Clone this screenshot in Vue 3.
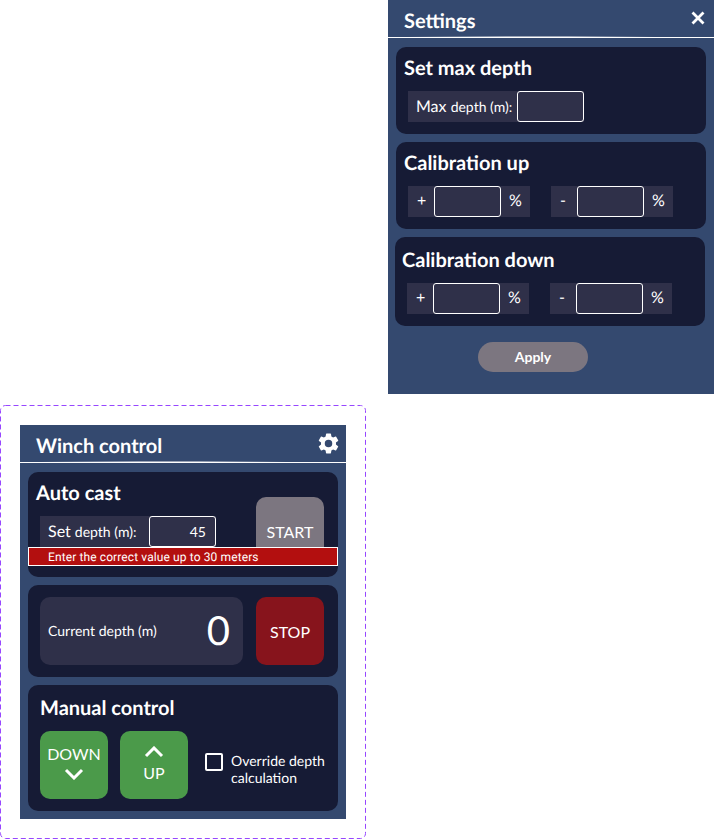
<script setup>
const calibrations = [
  { title: "Calibration up", shifted: false },
  { title: "Calibration down", shifted: true }
];
const signs = ["+", "-"];
</script>

<template>
  <div class="page">
    <section class="panel settings">
      <header class="panel__head">
        <h1 class="panel__title tied">Settings</h1>
        <svg class="close" viewBox="0 0 14 14" aria-hidden="true">
          <path d="M1.5 1.5l11 11M12.5 1.5l-11 11" />
        </svg>
      </header>

      <div class="card card--set">
        <h2 class="card__title">Set max depth</h2>
        <div class="field">
          <span class="field__label">Max <small>depth (m):</small></span>
          <input class="field__input" type="text" />
        </div>
      </div>

      <div
        v-for="c in calibrations"
        :key="c.title"
        :class="['card', 'card--cal', { 'card--shifted': c.shifted }]"
      >
        <h2 class="card__title tied">{{ c.title }}</h2>
        <div class="cal">
          <div v-for="s in signs" :key="s" class="field">
            <span class="field__sign">{{ s }}</span>
            <input class="field__input" type="text" />
            <span class="field__unit">%</span>
          </div>
        </div>
      </div>

      <button class="apply" type="button">Apply</button>
    </section>

    <div class="frame">
      <svg class="frame__dash" width="366" height="434" aria-hidden="true">
        <rect x="0.5" y="0.5" width="365" height="433" rx="5" />
      </svg>
      <section class="panel winch">
        <header class="panel__head panel__head--winch">
          <h1 class="panel__title">Winch control</h1>
          <svg class="gear" viewBox="0 0 24 24" aria-hidden="true">
            <path d="M19.14 12.94c.04-.3.06-.61.06-.94 0-.32-.02-.64-.07-.94l2.03-1.58a.49.49 0 0 0 .12-.61l-1.92-3.32a.49.49 0 0 0-.59-.22l-2.39.96c-.5-.38-1.03-.7-1.62-.94l-.36-2.54a.48.48 0 0 0-.48-.41h-3.84a.48.48 0 0 0-.47.41l-.36 2.54c-.59.24-1.13.57-1.62.94l-2.39-.96a.48.48 0 0 0-.59.22L2.74 8.87a.48.48 0 0 0 .12.61l2.03 1.58c-.05.3-.09.63-.09.94s.02.64.07.94l-2.03 1.58a.49.49 0 0 0-.12.61l1.92 3.32c.12.22.37.29.59.22l2.39-.96c.5.38 1.03.7 1.62.94l.36 2.54c.05.24.24.41.48.41h3.84c.24 0 .44-.17.47-.41l.36-2.54c.59-.24 1.13-.56 1.62-.94l2.39.96c.22.08.47 0 .59-.22l1.92-3.32a.48.48 0 0 0-.12-.61l-2.01-1.58zM12 15.6A3.6 3.6 0 1 1 12 8.4a3.6 3.6 0 0 1 0 7.2z" />
          </svg>
        </header>

        <div class="card card--auto">
          <div class="auto__left">
            <h2 class="card__title">Auto cast</h2>
            <div class="field">
              <span class="field__label">Set <small>depth (m):</small></span>
              <input class="field__input field__input--value" type="text" value="45" />
            </div>
          </div>
          <button class="action action--start" type="button">START</button>
          <div class="error">Enter the correct value up to 30 meters</div>
        </div>

        <div class="card card--depth">
          <div class="depth">
            <span class="depth__label">Current depth (m)</span>
            <span class="depth__value">0</span>
          </div>
          <button class="action action--stop" type="button">STOP</button>
        </div>

        <div class="card card--manual">
          <h2 class="card__title">Manual control</h2>
          <div class="manual">
            <button class="action action--go action--down" type="button">
              <span>DOWN</span>
              <svg class="chevron" viewBox="0 0 20 12" aria-hidden="true"><path d="M2 2l8 8 8-8" /></svg>
            </button>
            <button class="action action--go" type="button">
              <svg class="chevron" viewBox="0 0 20 12" aria-hidden="true"><path d="M2 10l8-8 8 8" /></svg>
              <span>UP</span>
            </button>
            <label class="override">
              <span class="override__box"></span>
              <span class="override__text tied">Override depth calculation</span>
            </label>
          </div>
        </div>
      </section>
    </div>
  </div>
</template>

<style>
html, body {
  margin: 0;
  background: #fff;
}
</style>

<style scoped>
.page {
  width: 714px;
  height: 839px;
  display: flex;
  flex-direction: column;
  font-family: Lato, "Liberation Sans", sans-serif;
  text-rendering: geometricPrecision;
  color: #fff;
  overflow: hidden;
}
.tied {
  font-variant-ligatures: common-ligatures discretionary-ligatures;
}
h1, h2 {
  margin: 0;
}
button {
  font-family: inherit;
  color: #fff;
  border: none;
  padding: 0;
}
.panel {
  background: #34496f;
  box-sizing: border-box;
  width: 326px;
  display: flex;
  flex-direction: column;
}
.panel__head {
  position: relative;
  height: 38px;
  box-sizing: border-box;
  border-bottom: 1px solid #fff;
  display: flex;
  align-items: center;
  justify-content: space-between;
  padding: 0 9px 0 16px;
  margin-bottom: 9px;
}
/* the rule in the design is very slightly tilted */
.panel__head::after {
  content: "";
  position: absolute;
  left: 20px;
  width: 246px;
  bottom: 0;
  height: 1px;
  background: linear-gradient(90deg, transparent, rgba(255, 255, 255, 0.5) 40%, rgba(255, 255, 255, 0.5) 65%, transparent);
}
.panel__title {
  font-size: 20px;
  font-weight: 700;
  line-height: 24px;
  padding-top: 4px;
}
.settings {
  height: 394px;
  margin-left: 388px;
  align-items: flex-start;
}
.settings .panel__head {
  width: 100%;
}
.close {
  width: 14px;
  height: 14px;
  margin-top: -2px;
  fill: none;
  stroke: #fff;
  stroke-width: 2.8;
}
.card {
  width: 310px;
  box-sizing: border-box;
  margin: 0 0 8px 8px;
  background: #161b35;
  border-radius: 10px;
  padding: 9px 8px 0;
}
.card__title {
  font-size: 20px;
  font-weight: 700;
  line-height: 24px;
  margin-bottom: 11px;
}
.card--set, .card--cal {
  height: 87px;
}
.card--shifted {
  height: 89px;
  margin-left: 7px;
  padding: 11px 7px 0;
}
.card--set .field, .card--cal .cal {
  margin-left: 4px;
}
.card--shifted .cal {
  margin-left: 5px;
}
.field {
  display: flex;
  height: 31px;
  background: #2f3049;
}
.card--set .field, .auto__left .field {
  width: fit-content;
}
.field__label {
  font-size: 16px;
  line-height: 31px;
  padding-left: 8px;
  width: 101px;
  white-space: nowrap;
}
.field__label small {
  font-size: 14px;
}
.field__input {
  width: 67px;
  height: 31px;
  box-sizing: border-box;
  background: #2f3049;
  border: 1px solid #fff;
  border-radius: 3px;
  outline: none;
  color: #fff;
  font: 14px Lato, sans-serif;
  padding: 0;
}
.field__input--value {
  text-align: right;
  padding-right: 9px;
}
.cal {
  display: flex;
  gap: 21px;
}
.field__sign {
  width: 26px;
  padding-left: 9px;
  box-sizing: border-box;
  font-size: 16px;
  line-height: 30px;
}
.field__unit {
  width: 29px;
  text-align: center;
  font-size: 16px;
  line-height: 30px;
}
.apply {
  width: 110px;
  height: 30px;
  margin: 8px 0 0 90px;
  padding-bottom: 2px;
  border-radius: 15px;
  background: #7c7680;
  font-size: 14px;
  font-weight: 700;
}
.frame {
  position: relative;
  width: 366px;
  height: 434px;
  margin-top: 11px;
  box-sizing: border-box;
  padding: 20px;
}
.frame__dash {
  position: absolute;
  left: 0;
  top: 0;
  fill: none;
  stroke: #9747ff;
  stroke-dasharray: 5 3;
}
.winch {
  height: 394px;
}
.gear {
  width: 25px;
  height: 25px;
  fill: #fff;
  margin: 0 -4px 0 0;
}
.card--auto {
  position: relative;
  height: 105px;
  display: flex;
  justify-content: space-between;
  padding: 9px 14px 0 8px;
}
.auto__left .field {
  margin-left: 4px;
}
.action {
  width: 68px;
  height: 68px;
  border-radius: 10px;
  font-size: 16px;
  flex: none;
}
.action--start {
  margin-top: 16px;
  background: #7c7680;
}
.action--stop {
  background: #87141c;
}
.action--go {
  background: #4b9a4a;
  display: flex;
  flex-direction: column;
  align-items: center;
  justify-content: center;
  gap: 5px;
  padding-bottom: 2px;
}
.action--down {
  padding-bottom: 6px;
}
.chevron {
  width: 20px;
  height: 12px;
  fill: none;
  stroke: #fff;
  stroke-width: 3;
}
.error {
  position: absolute;
  left: 0;
  right: 0;
  top: 75px;
  height: 19px;
  box-sizing: border-box;
  border: 1px solid #fff;
  background: #b30f0f;
  font: 12px/18px Roboto, sans-serif;
  letter-spacing: 0.11px;
  padding-left: 19px;
}
.card--depth {
  height: 92px;
  display: flex;
  justify-content: space-between;
  padding: 12px 14px 0 12px;
}
.depth {
  width: 203px;
  height: 68px;
  box-sizing: border-box;
  background: #2f3049;
  border-radius: 10px;
  display: flex;
  align-items: center;
  justify-content: space-between;
  padding: 0 13px 2px 8px;
}
.depth__label {
  font-size: 14px;
}
.depth__value {
  font-size: 40px;
  font-weight: 400;
}
.card--manual {
  height: 126px;
  margin-bottom: 0;
  padding: 11px 12px 0;
}
.manual {
  display: flex;
  gap: 12px;
}
.override {
  display: flex;
  align-items: flex-start;
  gap: 8px;
  margin-left: 5px;
  padding-top: 21px;
}
.override__box {
  width: 18px;
  height: 18px;
  margin-top: 1px;
  box-sizing: border-box;
  border: 2px solid #fff;
  border-radius: 2px;
  flex: none;
}
.override__text {
  font-size: 14px;
  line-height: 17px;
  width: 100px;
}
</style>
